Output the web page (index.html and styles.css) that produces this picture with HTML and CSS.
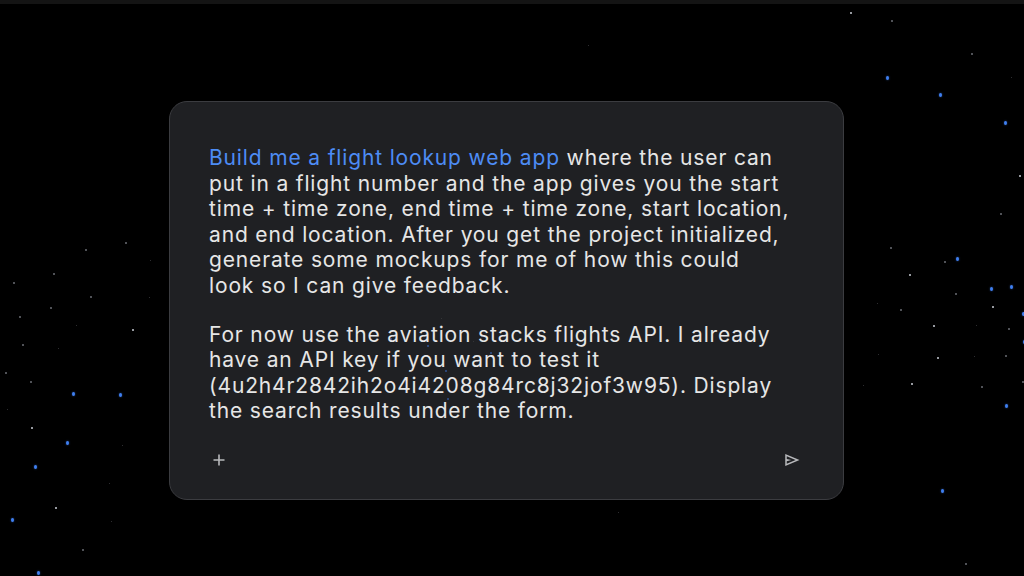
FILE: index.html
```html
<!DOCTYPE html>
<html lang="en">
<head>
    <meta charset="UTF-8">
    <meta name="viewport" content="width=device-width, initial-scale=1.0">
    <title>Prompt</title>
    <link rel="stylesheet" href="styles.css">
</head>
<body>
    <div class="top-bar"></div>
    <div id="sky"></div>

    <main class="stage">
        <div class="prompt-card">
            <div class="prompt-text">
                <p><span class="highlight">Build me a flight lookup web app</span> where the user can put in a flight number and the app gives you the start time + time zone, end time + time zone, start location, and end location. After you get the project initialized, generate some mockups for me of how this could look so I can give feedback.</p>
                <p>For now use the aviation stacks flights API. I already have an API key if you want to test it (4u2h4r2842ih2o4i4208g84rc8j32jof3w95). Display the search results under the form.</p>
            </div>
            <div class="prompt-actions">
                <button class="icon-btn" aria-label="Add">
                    <svg width="12" height="12" viewBox="0 0 12 12"><path d="M6 0.5v11M0.5 6h11" stroke="currentColor" stroke-width="1.6"/></svg>
                </button>
                <button class="icon-btn" aria-label="Send">
                    <svg width="18" height="18" viewBox="0 0 24 24"><path d="M3 20V4l19 8Zm2-3 11.85-5L5 7v3.5l6 1.5-6 1.5Z" fill="currentColor"/></svg>
                </button>
            </div>
        </div>
    </main>

    <script>
        const sky = document.getElementById('sky');

        // x, y, kind (b = blue, w = white, g = grey, d = dim, t = faint speck over the card)
        const stars = [
            [850, 12, 'w'], [891, 20, 'g'], [588, 45, 'd'], [971, 53, 'g'], [1011, 77, 'd'],
            [886, 76, 'b'], [939, 93, 'b'], [1004, 121, 'b'], [1019, 175, 'w'], [1000, 213, 'g'],
            [890, 247, 'g'], [956, 257, 'b'], [944, 261, 'g'], [909, 274, 'w'], [955, 293, 'g'],
            [990, 287, 'b'], [1010, 285, 'b'], [992, 306, 'w'], [1022, 312, 'b'], [900, 309, 'g'],
            [933, 325, 'w'], [976, 325, 'd'], [1008, 328, 'g'], [1023, 340, 'b'], [877, 303, 'd'],
            [878, 354, 'd'], [937, 357, 'w'], [974, 356, 'd'], [1005, 355, 'g'], [1022, 381, 'g'],
            [911, 383, 'w'], [863, 385, 'd'], [981, 386, 'g'], [1005, 404, 'b'], [941, 489, 'b'],
            [965, 563, 'g'],
            [30, 381, 'g'], [72, 392, 'b'], [119, 393, 'b'], [7, 409, 'd'], [31, 427, 'w'],
            [66, 441, 'b'], [122, 445, 'd'], [34, 465, 'b'], [109, 483, 'd'], [55, 507, 'w'],
            [11, 518, 'b'], [111, 521, 'd'], [82, 549, 'g'], [37, 571, 'b'],
            [125, 242, 'g'], [85, 249, 'g'], [150, 260, 'd'], [13, 282, 'g'], [53, 273, 'g'],
            [90, 296, 'g'], [50, 307, 'g'], [149, 297, 'd'], [19, 316, 'g'], [76, 325, 'd'],
            [132, 329, 'w'], [22, 344, 'g'], [58, 348, 'd'], [5, 372, 'g'],
            [390, 338, 't'], [427, 345, 't'], [490, 352, 't'], [445, 370, 't'], [447, 398, 't'],
            [375, 362, 'd'], [473, 341, 'd'], [441, 318, 'd'], [618, 512, 'd']
        ];

        stars.forEach(([x, y, kind]) => {
            const star = document.createElement('span');
            star.className = 'star star-' + kind;
            star.style.left = x + 'px';
            star.style.top = y + 'px';
            sky.appendChild(star);
        });
    </script>
</body>
</html>
```

FILE: styles.css
```css
body {
    margin: 0;
    width: 1024px;
    height: 576px;
    overflow: hidden;
    background-color: #000;
    font-family: Inter, "Open Sans", sans-serif;
    position: relative;
}
.top-bar {
    height: 4px;
    background-color: #141414;
}
#sky {
    position: absolute;
    inset: 0;
    z-index: 2;
    pointer-events: none;
}
.star {
    position: absolute;
    width: 2px;
    height: 2px;
    border-radius: 50%;
}
.star-b {
    width: 3px;
    height: 4px;
    background-color: #3f7ff0;
    box-shadow: 0 0 2px rgba(63, 127, 240, 0.6);
}
.star-w {
    background-color: #c9cdd4;
}
.star-g {
    background-color: #6b6e74;
}
.star-d {
    width: 1px;
    height: 1px;
    background-color: #3c3d40;
}
.star-t {
    width: 2px;
    height: 2px;
    background-color: rgba(63, 127, 240, 0.55);
}
.stage {
    padding: 97px 0 0 169px;
}
.prompt-card {
    width: 675px;
    height: 399px;
    box-sizing: border-box;
    background-color: #1f2023;
    border: 1px solid #3b3c40;
    border-radius: 18px;
    padding: 43px 35px 23px 33px;
    display: flex;
    flex-direction: column;
    justify-content: space-between;
}
.prompt-text {
    width: 582px;
    padding: 0 0 0 6px;
    color: #e6e6e6;
    font-size: 21px;
    line-height: 25.6px;
    letter-spacing: 0.85px;
}
.prompt-text p {
    margin: 0 0 23px;
}
.prompt-text p:last-child {
    margin-bottom: 0;
}
.highlight {
    color: #4d8cf5;
}
.prompt-actions {
    display: flex;
    justify-content: space-between;
    align-items: center;
}
.icon-btn {
    width: 32px;
    height: 32px;
    padding: 0;
    border: none;
    background: none;
    color: #b8b9bc;
    display: flex;
    align-items: center;
    justify-content: center;
    cursor: pointer;
}
```
